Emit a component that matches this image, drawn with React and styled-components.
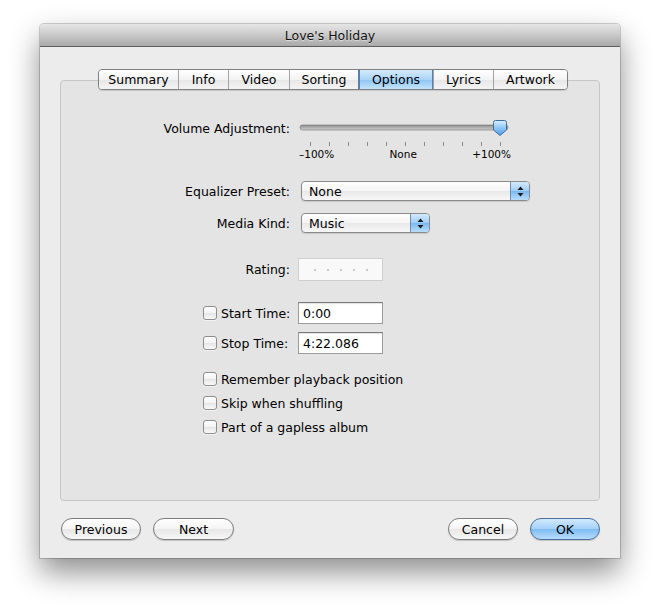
import React from "react";
import styled, { createGlobalStyle, css } from "styled-components";

const GlobalStyle = createGlobalStyle`
  html, body {
    margin: 0;
    padding: 0;
    background: #ffffff;
  }
  body {
    font-family: "DejaVu Sans", "Liberation Sans", sans-serif;
    font-size: 12px;
    color: #000;
  }
`;

// ------------------ Window chrome ------------------
const Page = styled.div`
  padding: 24px 0 0 40px;
  height: 614px;
  box-sizing: border-box;
`;

const Window = styled.div`
  width: 580px;
  height: 534px;
  background: #ececec;
  box-shadow: 0 14px 30px rgba(0, 0, 0, 0.45), 0 0 0 1px rgba(0, 0, 0, 0.18);
  border-radius: 4px 4px 0 0;
  display: flex;
  flex-direction: column;
`;

const TitleBar = styled.div`
  height: 22px;
  border-bottom: 1px solid #5e5e5e;
  border-radius: 4px 4px 0 0;
  background: linear-gradient(#e6e6e6, #cfcfcf 40%, #a9a9a9);
  display: flex;
  align-items: center;
  justify-content: center;
  font-size: 12.5px;
  color: #111;
  text-shadow: 0 1px 0 rgba(255, 255, 255, 0.5);
`;

const Content = styled.div`
  padding: 33px 20px 0 20px;
  display: flex;
  flex-direction: column;
`;

// ------------------ Group box & tabs ------------------
const GroupBox = styled.div`
  height: 421px;
  box-sizing: border-box;
  border: 1px solid #c6c6c6;
  border-radius: 4px;
  background: #e4e4e4;
  display: flex;
  flex-direction: column;
`;

const TabBar = styled.div`
  margin: -12px auto 0 auto;
  padding-left: 6px;
  display: flex;
`;

const TabGroup = styled.div`
  display: flex;
  border: 1px solid #7f7f7f;
  border-radius: 4px;
  overflow: hidden;
  box-shadow: 0 1px 1px rgba(0, 0, 0, 0.12);
`;

const Tab = styled.div`
  width: ${(p) => p.$w}px;
  height: 19px;
  box-sizing: border-box;
  display: flex;
  align-items: center;
  justify-content: center;
  font-size: 12.5px;
  background: linear-gradient(#ffffff, #f3f3f3 50%, #e6e6e6 51%, #f4f4f4);
  & + & {
    border-left: 1px solid #a3a3a3;
  }
  ${(p) =>
    p.$active &&
    css`
      background: linear-gradient(#d6ebfc, #a9d4f8 50%, #8cc5f5 51%, #c3e3fc);
      border-left-color: #5a7fa8 !important;
      box-shadow: inset 1px 0 0 #5a7fa8, inset -1px 0 0 #5a7fa8;
    `}
`;

// ------------------ Form rows ------------------
const Form = styled.div`
  display: flex;
  flex-direction: column;
`;

const Row = styled.div`
  display: grid;
  grid-template-columns: 229px 1fr;
  column-gap: 8px;
  align-items: center;
  height: ${(p) => p.$h || 20}px;
  margin-top: ${(p) => p.$mt || 0}px;
`;

const Label = styled.div`
  display: flex;
  align-items: center;
  justify-content: ${(p) => (p.$check ? "flex-start" : "flex-end")};
  padding-left: ${(p) => (p.$check ? 142 : 0)}px;
  gap: 4px;
  white-space: nowrap;
  font-size: 12.5px;
  color: #000;
`;

const CheckRow = styled.label`
  display: flex;
  align-items: center;
  gap: 4px;
  height: 16px;
  padding-left: 142px;
  margin-top: ${(p) => p.$mt || 0}px;
  font-size: 12.5px;
`;

const Checkbox = styled.span`
  width: 12px;
  height: 12px;
  border: 1px solid #8d8d8d;
  border-radius: 3px;
  background: linear-gradient(#ffffff, #f2f2f2 50%, #e4e4e4 51%, #fafafa);
  box-shadow: 0 1px 0 rgba(255, 255, 255, 0.6);
  flex: none;
`;

// ------------------ Slider ------------------
const SliderWrap = styled.div`
  width: 216px;
  height: 20px;
  display: flex;
`;

const TickArea = styled.div`
  display: flex;
  flex-direction: column;
  width: 216px;
`;

const Ticks = styled.div`
  display: flex;
  justify-content: space-between;
  width: 191px;
  margin-left: 12px;
  margin-top: 3px;
`;

const Tick = styled.span`
  width: 1px;
  height: 4px;
  background: #8a8a8a;
`;

const TickLabels = styled.div`
  display: flex;
  justify-content: space-between;
  width: 212px;
  margin-left: 1px;
  margin-top: 2px;
  font-size: 10.5px;
  line-height: 12px;
`;

// ------------------ Popups & fields ------------------
const Popup = styled.div`
  width: ${(p) => p.$w}px;
  height: 20px;
  box-sizing: border-box;
  margin-left: 3px;
  border: 1px solid #8a8a8a;
  border-radius: 4px;
  background: linear-gradient(#ffffff, #f4f4f4 50%, #e8e8e8 51%, #f7f7f7);
  box-shadow: 0 1px 1px rgba(0, 0, 0, 0.12);
  display: flex;
  align-items: center;
  overflow: hidden;
`;

const PopupText = styled.span`
  flex: 1;
  padding-left: 7px;
  font-size: 12.5px;
`;

const Stepper = styled.span`
  width: 18px;
  height: 100%;
  border-left: 1px solid #6f8db0;
  background: linear-gradient(#d3eafd, #9fcdf6 50%, #7ab8f1 51%, #b9ddfb);
  display: flex;
  align-items: center;
  justify-content: center;
`;

const Field = styled.div`
  width: 85px;
  height: 22px;
  box-sizing: border-box;
  border: 1px solid #9c9c9c;
  border-top-color: #7a7a7a;
  background: #fff;
  display: flex;
  align-items: center;
  padding-left: 4px;
  font-size: 12.5px;
  box-shadow: inset 0 1px 1px rgba(0, 0, 0, 0.12);
`;

const RatingBox = styled.div`
  width: 85px;
  height: 23px;
  box-sizing: border-box;
  border: 1px solid #cfcfcf;
  background: #f9f9f9;
  display: flex;
  align-items: center;
  gap: 11px;
  padding-left: 15px;
`;

const Dot = styled.span`
  width: 2px;
  height: 2px;
  border-radius: 1px;
  background: #b9b9b9;
`;

// ------------------ Footer buttons ------------------
const Footer = styled.div`
  display: flex;
  align-items: center;
  padding: 17px 0 0 1px;
`;

const Spacer = styled.div`
  flex: 1;
`;

const PillButton = styled.button`
  width: ${(p) => p.$w}px;
  height: 22px;
  margin-left: ${(p) => p.$ml || 0}px;
  border-radius: 11px;
  border: 1px solid ${(p) => (p.$primary ? "#4a6f9c" : "#7d7d7d")};
  background: ${(p) =>
    p.$primary
      ? "linear-gradient(#d2e9fd, #a3d0f8 50%, #7ebcf3 51%, #b8dcfb)"
      : "linear-gradient(#ffffff, #f4f4f4 50%, #e7e7e7 51%, #f7f7f7)"};
  box-shadow: 0 1px 1px rgba(0, 0, 0, 0.18);
  font-family: inherit;
  font-size: 12.5px;
  color: #000;
  padding: 0;
`;

// ------------------ Drawings ------------------
const SliderSvg = () => (
  <svg width="216" height="20" viewBox="0 0 216 20">
    <defs>
      <linearGradient id="track" x1="0" y1="0" x2="0" y2="1">
        <stop offset="0" stopColor="#8c8c8c" />
        <stop offset="1" stopColor="#d0d0d0" />
      </linearGradient>
      <linearGradient id="knob" x1="0" y1="0" x2="0" y2="1">
        <stop offset="0" stopColor="#d9eefe" />
        <stop offset="0.5" stopColor="#8fc6f6" />
        <stop offset="1" stopColor="#4f9ae6" />
      </linearGradient>
    </defs>
    <rect x="2" y="7" width="208" height="5" rx="2.5" fill="url(#track)" stroke="#6f6f6f" strokeWidth="0.6" />
    <path
      d="M195.5 4.5 Q195.5 2.5 197.5 2.5 H206.5 Q208.5 2.5 208.5 4.5 V12 L202 17.5 L195.5 12 Z"
      fill="url(#knob)"
      stroke="#3f6f9f"
      strokeWidth="1"
    />
  </svg>
);

const StepperArrows = () => (
  <svg width="7" height="11" viewBox="0 0 7 11">
    <path d="M3.5 0.5 L6.5 4 H0.5 Z" fill="#1b1b1b" />
    <path d="M3.5 10.5 L6.5 7 H0.5 Z" fill="#1b1b1b" />
  </svg>
);

// ------------------ Component ------------------
const tabs = [
  { name: "Summary", w: 79 },
  { name: "Info", w: 50 },
  { name: "Video", w: 61 },
  { name: "Sorting", w: 69 },
  { name: "Options", w: 75, active: true },
  { name: "Lyrics", w: 60 },
  { name: "Artwork", w: 74 },
];

const App = () => {
  return (
    <Page>
      <GlobalStyle />
      <Window>
        <TitleBar>Love's Holiday</TitleBar>
        <Content>
          <GroupBox>
            <TabBar>
              <TabGroup>
                {tabs.map((t) => (
                  <Tab key={t.name} $w={t.w} $active={t.active}>
                    {t.name}
                  </Tab>
                ))}
              </TabGroup>
            </TabBar>

            <Form>
              <Row $mt={28}>
                <Label>Volume Adjustment:</Label>
                <SliderWrap>
                  <SliderSvg />
                </SliderWrap>
              </Row>
              <Row $h={19} $mt={1}>
                <span />
                <TickArea>
                  <Ticks>
                    {Array.from({ length: 11 }).map((_, i) => (
                      <Tick key={i} />
                    ))}
                  </Ticks>
                  <TickLabels>
                    <span>–100%</span>
                    <span>None</span>
                    <span>+100%</span>
                  </TickLabels>
                </TickArea>
              </Row>

              <Row $mt={23}>
                <Label>Equalizer Preset:</Label>
                <Popup $w={229}>
                  <PopupText>None</PopupText>
                  <Stepper>
                    <StepperArrows />
                  </Stepper>
                </Popup>
              </Row>
              <Row $mt={12}>
                <Label>Media Kind:</Label>
                <Popup $w={129}>
                  <PopupText>Music</PopupText>
                  <Stepper>
                    <StepperArrows />
                  </Stepper>
                </Popup>
              </Row>

              <Row $h={23} $mt={25}>
                <Label>Rating:</Label>
                <RatingBox>
                  <Dot />
                  <Dot />
                  <Dot />
                  <Dot />
                  <Dot />
                </RatingBox>
              </Row>

              <Row $h={22} $mt={21}>
                <Label $check>
                  <Checkbox />
                  Start Time:
                </Label>
                <Field>0:00</Field>
              </Row>
              <Row $h={22} $mt={8}>
                <Label $check>
                  <Checkbox />
                  Stop Time:
                </Label>
                <Field>4:22.086</Field>
              </Row>

              <CheckRow $mt={17}>
                <Checkbox />
                Remember playback position
              </CheckRow>
              <CheckRow $mt={8}>
                <Checkbox />
                Skip when shuffling
              </CheckRow>
              <CheckRow $mt={8}>
                <Checkbox />
                Part of a gapless album
              </CheckRow>
            </Form>
          </GroupBox>

          <Footer>
            <PillButton $w={80}>Previous</PillButton>
            <PillButton $w={81} $ml={12}>Next</PillButton>
            <Spacer />
            <PillButton $w={70}>Cancel</PillButton>
            <PillButton $w={70} $ml={12} $primary>OK</PillButton>
          </Footer>
        </Content>
      </Window>
    </Page>
  );
};

export default App;
